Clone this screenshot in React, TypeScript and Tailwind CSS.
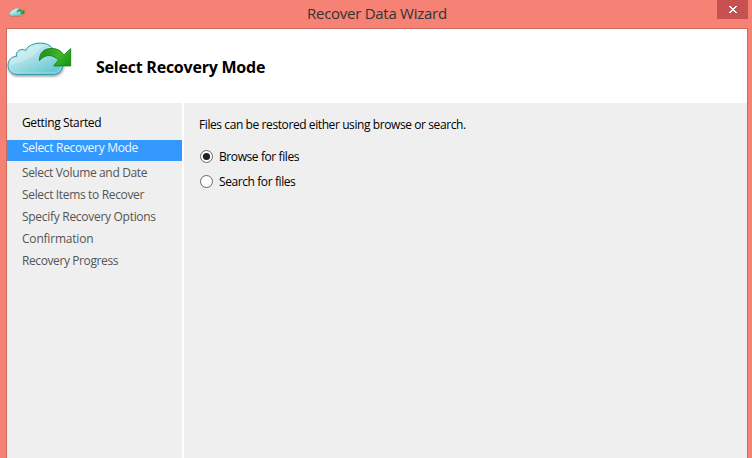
import React from "react";

function CloudIcon({ className, id }: { className: string; id: string }) {
  return (
    <svg className={className} viewBox="0 0 66 38" fill="none">
      <defs>
        <linearGradient id={`${id}-cloud`} x1="20" y1="2" x2="34" y2="34" gradientUnits="userSpaceOnUse">
          <stop offset="0" stopColor="#d3f0f3" />
          <stop offset="0.45" stopColor="#a5dfe5" />
          <stop offset="1" stopColor="#68c8d3" />
        </linearGradient>
        <linearGradient id={`${id}-arrow`} x1="40" y1="6" x2="60" y2="24" gradientUnits="userSpaceOnUse">
          <stop offset="0" stopColor="#1d8e1a" />
          <stop offset="0.5" stopColor="#43b626" />
          <stop offset="1" stopColor="#159a16" />
        </linearGradient>
        <filter id={`${id}-shadow`} x="-10%" y="-10%" width="125%" height="140%">
          <feDropShadow dx="0.6" dy="1.6" stdDeviation="0.9" floodColor="#000" floodOpacity="0.4" />
        </filter>
      </defs>
      <path
        filter={`url(#${id}-shadow)`}
        d="M10 32.300C4.500 32.300 1 28.500 1 23.500C1 18 4.500 14.500 9.500 14.300C8.500 9.500 13.500 5.700 18.500 8.300C21 3.500 27 1.100 33.500 1.100C40.500 1.100 45.500 4.500 47.500 10C53 12 55.800 17 55.800 22.500C55.800 28.500 51.500 32.300 46 32.300Z"
        fill={`url(#${id}-cloud)`}
        stroke="#2597aa"
        strokeWidth="1"
      />
      <path
        d="M10 31C5.500 31 2.300 28 2.300 23.500C2.300 18.500 6 15.500 11 15.600C9 10.500 14.500 7 19.200 10C21.500 4.800 27 2.400 33.500 2.400C40 2.400 44.500 5.500 46.500 11C51.500 12.500 54.500 17 54.500 22.500C54.500 28 51 31 46 31Z"
        stroke="#b5edf1"
        strokeOpacity="0.75"
        strokeWidth="0.9"
      />
      <path d="M3 23C3 18 7 15.500 12 16.500C10 11 15 8.500 20 11.500C22 5 29 2.500 35 3.200C29 15 18 20 3 23Z" fill="#fff" fillOpacity="0.22" />
      <g transform="translate(-0.8 0.4)">
        <path
          d="M33.200 18.300C33 10.500 38 6.100 45 6.100C50.500 6.100 54.500 8 57.800 12.400L64.500 6.200V23.500H47.500L52.300 17.600C47 12 39 11 33.200 18.300Z"
          fill={`url(#${id}-arrow)`}
          stroke="#128014"
          strokeWidth="0.9"
        />
        <path d="M34.500 14.500C37 8.500 44 5.800 50.500 8.700C53.500 10 55.500 12 57.700 14L63.500 8.500" stroke="#74cc45" strokeOpacity="0.4" strokeWidth="0.8" />
      </g>
    </svg>
  );
}

function Radio({ checked, label }: { checked?: boolean; label: string }) {
  return (
    <div role="radio" aria-checked={!!checked} className="flex h-[25px] items-center gap-[6px] pl-px">
      <svg className="h-[13px] w-[13px] shrink-0" viewBox="0 0 13 13">
        <circle cx="6.500" cy="6.500" r="6" fill="#fff" stroke="#666" />
        {checked && <circle cx="6.500" cy="6.500" r="3.600" fill="#222" />}
      </svg>
      <span className="whitespace-nowrap tracking-[-0.41px]">{label}</span>
    </div>
  );
}

const upcoming = [
  { label: "Select Volume and Date", tracking: "tracking-[-0.35px]" },
  { label: "Select Items to Recover", tracking: "tracking-[-0.34px]" },
  { label: "Specify Recovery Options", tracking: "tracking-[-0.29px]" },
  { label: "Confirmation", tracking: "tracking-[-0.2px]" },
  { label: "Recovery Progress", tracking: "tracking-[-0.4px]" },
];

export default function App() {
  return (
    <div className="flex h-[458px] w-[752px] flex-col overflow-hidden bg-[#f58274] font-['Open_Sans',sans-serif] text-[12px] leading-[22px] text-black">
      <div className="flex h-[28px] shrink-0 items-start">
        <CloudIcon id="small" className="mt-[8px] ml-[9px] h-[9px] w-[16px] shrink-0" />
        <h1 className="ml-[282px] w-[410px] whitespace-nowrap text-[15px] leading-[26px] tracking-[-0.27px] text-[#333]">
          Recover Data Wizard
        </h1>
        <button aria-label="Close" className="flex h-[19px] w-[31px] shrink-0 items-center justify-center bg-[#c75050]">
          <svg className="h-[7px] w-[8px]" viewBox="0 0 8 7" shapeRendering="crispEdges">
            <path d="M0 0h2v1h1v1h2v-1h1v-1h2v1h-1v1h-1v1h-1v1h1v1h1v1h1v1h-2v-1h-1v-1h-2v1h-1v1h-2v-1h1v-1h1v-1h1v-1h-1v-1h-1v-1h-1z" fill="#fff" />
          </svg>
        </button>
      </div>
      <div className="mr-[4px] ml-[6px] flex min-h-0 flex-1 flex-col border border-b-0 border-[#ce6b60] bg-[#efefef]">
        <header className="flex h-[74px] shrink-0 items-start bg-white">
          <CloudIcon id="large" className="mt-[13px] h-[38px] w-[66px] shrink-0" />
          <h2 className="mt-[28px] ml-[23px] whitespace-nowrap text-[16px] leading-[20px] font-bold tracking-[-0.23px]">Select Recovery Mode</h2>
        </header>
        <div className="flex min-h-0 flex-1">
          <nav className="w-[177px] shrink-0 border-r-2 border-white pt-[9px] whitespace-nowrap">
            <div className="pl-[15px] tracking-[-0.38px]">Getting Started</div>
            <div className="mt-[6px] h-[21px] bg-[#3399ff] pl-[15px] leading-[15px] tracking-[-0.31px] text-[#f2f7ff]">Select Recovery Mode</div>
            <div className="mt-px text-[#555]">
              {upcoming.map((s) => (
                <div key={s.label} className={`pl-[15px] ${s.tracking}`}>{s.label}</div>
              ))}
            </div>
          </nav>
          <main className="flex-1 pt-[11px] pl-[15px]">
            <p className="whitespace-nowrap tracking-[-0.41px]">Files can be restored either using browse or search.</p>
            <div role="radiogroup" className="mt-[8px]">
              <Radio checked label="Browse for files" />
              <Radio label="Search for files" />
            </div>
          </main>
        </div>
      </div>
    </div>
  );
}
